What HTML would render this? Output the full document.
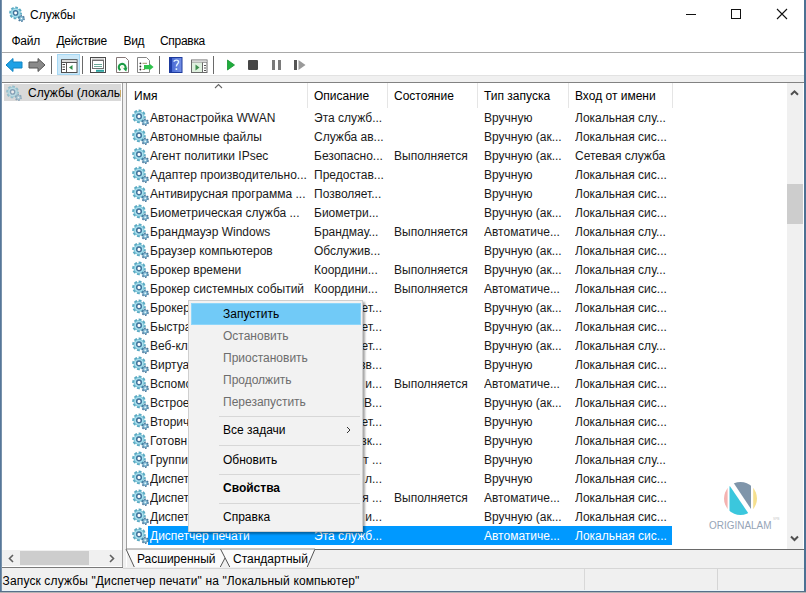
<!DOCTYPE html>
<html><head><meta charset="utf-8">
<style>
*{margin:0;padding:0;box-sizing:border-box}
html,body{width:806px;height:593px;overflow:hidden;background:#fff;font-family:"Liberation Sans",sans-serif;font-size:12px;color:#000}
.abs{position:absolute}
.t{position:absolute;white-space:nowrap;line-height:14px}
.r{position:absolute;white-space:nowrap;line-height:19px;height:19px;overflow:hidden;color:#1a1a1a}
.gear{position:absolute}
.m{position:absolute;left:223px;white-space:nowrap;line-height:14px}
.dis{color:#6d6d6d}
.sep{position:absolute;left:219px;width:141px;height:1px;background:#d7d7d7}
.vl{position:absolute;width:1px;background:#a0a0a0}
</style></head><body>
<svg width="0" height="0" style="position:absolute">
 <defs>
  <symbol id="g" viewBox="0 0 17 17">
   <circle cx="7" cy="7.4" r="5.7" fill="none" stroke="#5aa9c2" stroke-width="2.2" stroke-dasharray="2.8 1.67" stroke-dashoffset="1"/>
   <circle cx="7" cy="7.4" r="5" fill="#a6e0ee" stroke="#62b2c9" stroke-width=".7"/>
   <circle cx="7" cy="7.4" r="2.3" fill="#fff" stroke="#41739b" stroke-width="1.5"/>
   <circle cx="13.2" cy="13.3" r="2.9" fill="none" stroke="#46779c" stroke-width="1.6" stroke-dasharray="1.6 1.45"/>
   <circle cx="13.2" cy="13.3" r="2.4" fill="#86bfd8" stroke="#46779c" stroke-width=".6"/>
   <circle cx="13.2" cy="13.3" r=".8" fill="#fff"/>
  </symbol>
 </defs>
</svg>

<!-- title bar -->
<svg class="abs" style="left:9px;top:6px" width="16" height="16"><use href="#g"/></svg>
<div class="t" style="left:30px;top:8px">Службы</div>
<div class="abs" style="left:686px;top:14px;width:10px;height:1px;background:#111"></div>
<div class="abs" style="left:731px;top:9px;width:10px;height:10px;border:1px solid #111"></div>
<svg class="abs" style="left:776px;top:8px" width="12" height="12" viewBox="0 0 12 12"><path d="M1 1L11 11M11 1L1 11" stroke="#111" stroke-width="1.1"/></svg>

<!-- menu -->
<div class="t" style="left:11.5px;top:34px;letter-spacing:-.25px">Файл</div>
<div class="t" style="left:56.5px;top:34px;letter-spacing:-.3px">Действие</div>
<div class="t" style="left:123.5px;top:34px;letter-spacing:-.3px">Вид</div>
<div class="t" style="left:160px;top:34px;letter-spacing:-.3px">Справка</div>
<div class="abs" style="left:1px;top:52px;width:804px;height:1px;background:#a9a9a9"></div>

<!-- toolbar -->
<div class="abs" style="left:1px;top:75px;width:804px;height:1px;background:#e2e2e2"></div>
<div class="abs" style="left:1px;top:76px;width:804px;height:6px;background:#f0f0f0"></div>
<div class="abs" style="left:1px;top:82px;width:804px;height:1px;background:#828282"></div>

<!-- back arrow -->
<svg class="abs" style="left:5px;top:57px" width="18" height="16" viewBox="0 0 18 16"><path d="M1 8L8 1.5V5H17V11H8V14.5Z" fill="#1ea1e6" stroke="#1185c4" stroke-width="1"/></svg>
<!-- forward arrow -->
<svg class="abs" style="left:28px;top:57px" width="18" height="16" viewBox="0 0 18 16"><path d="M17 8L10 1.5V5H1V11H10V14.5Z" fill="#8a8a8a" stroke="#555" stroke-width="1"/></svg>
<div class="vl" style="left:51px;top:56px;height:18px;background:#6a6a6a"></div>
<!-- highlighted btn -->
<div class="abs" style="left:57px;top:54px;width:23px;height:21px;background:#cce8f8;border:1px solid #a7d8f4"></div>
<svg class="abs" style="left:61px;top:59px" width="17" height="15" viewBox="0 0 17 15"><rect x=".5" y=".7" width="15.5" height="12.8" fill="#fff" stroke="#4d4d4d"/><rect x="1" y="1.2" width="14.5" height="2" fill="#dcdcdc"/><path d="M1 3.5H16" stroke="#555"/><path d="M1.5 5.5H4M1.5 8H4M1.5 10.5H4" stroke="#444"/><path d="M5.5 3.5V13.5" stroke="#555"/><path d="M11.5 6L8 8.5L11.5 11Z" fill="#2e8f48"/></svg>
<div class="vl" style="left:82px;top:56px;height:18px;background:#6a6a6a"></div>
<!-- properties icon -->
<svg class="abs" style="left:90px;top:57px" width="16" height="16" viewBox="0 0 16 16"><rect x=".5" y=".5" width="15" height="15" fill="#fff" stroke="#4a4a4a"/><path d="M2 2.2H14" stroke="#9a9a9a"/><rect x="2.5" y="3.5" width="11" height="8" fill="#fff" stroke="#707070"/><path d="M4 7.5H12M4 9.5H12" stroke="#6aa898"/><rect x="6" y="12.8" width="8" height="2" fill="#2aa3a0"/></svg>
<!-- refresh -->
<svg class="abs" style="left:116px;top:57px" width="14" height="16" viewBox="0 0 14 16"><path d="M.5 .5H9.5L12.5 3.5V15.5H.5Z" fill="#fff" stroke="#857777"/><path d="M4.5 13.2A3.4 3.4 0 1 1 9.1 12" fill="none" stroke="#1c9c45" stroke-width="2.1"/><path d="M7 11.6L11.4 10.6L10.2 14.6Z" fill="#1c9c45"/><circle cx="6.2" cy="10.3" r="1.2" fill="#eef6d8"/></svg>
<!-- export -->
<svg class="abs" style="left:137px;top:57px" width="18" height="16" viewBox="0 0 18 16"><path d="M.5 .5H9.5L12.5 3.5V15.5H.5Z" fill="#fff" stroke="#858585"/><circle cx="3.4" cy="6.3" r=".9" fill="#333"/><circle cx="3.4" cy="9.5" r=".9" fill="#333"/><circle cx="3.4" cy="12.5" r=".9" fill="#333"/><path d="M5.5 6.3H10M5.5 12.5H8" stroke="#a89070"/><path d="M7 8H12.3V6.6L16.6 10.1L12.3 13.6V12.2H7Z" fill="#2fc24c"/></svg>
<div class="vl" style="left:159px;top:56px;height:18px;background:#6a6a6a"></div>
<!-- help -->
<svg class="abs" style="left:169px;top:57px" width="14" height="16" viewBox="0 0 14 16"><defs><linearGradient id="hg" x1="0" x2="1"><stop offset="0" stop-color="#3f63d0"/><stop offset="1" stop-color="#7590e6"/></linearGradient></defs><rect x=".5" y=".5" width="12.5" height="15" fill="url(#hg)" stroke="#1d3a9c"/><rect x="1" y="1" width="2" height="14" fill="#1f3ea8"/><path d="M5 4.8C5 2.6 9.6 2.6 9.6 5C9.6 6.8 7.4 7 7.4 9.6" fill="none" stroke="#dff2ff" stroke-width="1.4"/><rect x="6.6" y="11.2" width="1.6" height="1.8" fill="#dff2ff"/></svg>
<!-- action pane -->
<svg class="abs" style="left:191px;top:59px" width="17" height="14" viewBox="0 0 17 14"><rect x=".5" y="1" width="15.5" height="12.5" fill="#fff" stroke="#6a6a6a"/><path d="M1 3.2H16" stroke="#7a7a7a"/><rect x="1" y="1.6" width="15" height="1.2" fill="#d8d8d8"/><rect x="1" y="3.7" width="10" height="9.3" fill="#dff0df"/><path d="M4.5 5.5L8.5 8.5L4.5 11.5Z" fill="#3f8f50"/><line x1="11.5" y1="3.5" x2="11.5" y2="13" stroke="#6a6a6a"/><path d="M13 6.5H15M13 9H15M13 11.5H15" stroke="#555"/></svg>
<div class="vl" style="left:213px;top:56px;height:18px;background:#6a6a6a"></div>
<!-- play / stop / pause / resume -->
<svg class="abs" style="left:227px;top:59px" width="8" height="12" viewBox="0 0 8 12"><path d="M.5 1L7.5 6L.5 11Z" fill="#1fae3c" stroke="#15902e" stroke-width=".8"/></svg>
<div class="abs" style="left:248px;top:60px;width:10px;height:10px;background:#464646;border-radius:1px"></div>
<div class="abs" style="left:272px;top:60px;width:3px;height:10px;background:#7a7a7a"></div>
<div class="abs" style="left:278px;top:60px;width:3px;height:10px;background:#7a7a7a"></div>
<div class="abs" style="left:294px;top:60px;width:3px;height:10px;background:#555"></div>
<svg class="abs" style="left:298px;top:59px" width="8" height="12" viewBox="0 0 8 12"><path d="M.5 1L7.5 6L.5 11Z" fill="#9a9a9a"/></svg>

<!-- left pane -->
<div class="abs" style="left:1px;top:83px;width:121px;height:485px;background:#fff"></div>
<div class="abs" style="left:4px;top:84px;width:117px;height:17px;background:#d9d9d9"></div>
<svg class="abs" style="left:6px;top:85px;opacity:.55" width="16" height="16"><use href="#g"/></svg>
<div class="abs" style="left:28px;top:85px;width:93px;height:16px;overflow:hidden;white-space:nowrap;line-height:17px">Службы (локальные)</div>
<!-- left hscroll -->
<div class="abs" style="left:1px;top:550px;width:121px;height:16px;background:#f0f0f0"></div>
<div class="abs" style="left:20px;top:551px;width:69px;height:14px;background:#cdcdcd"></div>
<svg class="abs" style="left:8px;top:554px" width="6" height="9" viewBox="0 0 6 9"><path d="M5 1L1.5 4.5L5 8" fill="none" stroke="#606060" stroke-width="1.6"/></svg>
<svg class="abs" style="left:109px;top:554px" width="6" height="9" viewBox="0 0 6 9"><path d="M1 1L4.5 4.5L1 8" fill="none" stroke="#606060" stroke-width="1.6"/></svg>
<div class="abs" style="left:122px;top:83px;width:1px;height:485px;background:#a0a0a0"></div>
<div class="abs" style="left:123px;top:83px;width:3px;height:485px;background:#f0f0f0"></div>
<div class="abs" style="left:126px;top:83px;width:1px;height:466px;background:#a0a0a0"></div>

<!-- right pane header -->
<div class="t" style="left:134px;top:89px">Имя</div>
<svg class="abs" style="left:214px;top:83px" width="9" height="6" viewBox="0 0 9 6"><path d="M1 5L4.5 1.5L8 5" fill="none" stroke="#666" stroke-width="1.1"/></svg>
<div class="vl" style="left:307px;top:83px;height:25px;background:#e5e5e5"></div>
<div class="t" style="left:314px;top:89px">Описание</div>
<div class="vl" style="left:387px;top:83px;height:25px;background:#e5e5e5"></div>
<div class="t" style="left:394px;top:89px">Состояние</div>
<div class="vl" style="left:477px;top:83px;height:25px;background:#e5e5e5"></div>
<div class="t" style="left:484px;top:89px">Тип запуска</div>
<div class="vl" style="left:568px;top:83px;height:25px;background:#e5e5e5"></div>
<div class="t" style="left:575px;top:89px">Вход от имени</div>
<div class="vl" style="left:672px;top:83px;height:25px;background:#e5e5e5"></div>

<svg class="gear" style="left:132px;top:109px" width="17" height="17"><use href="#g"/></svg>
<div class="r" style="left:150px;top:109px;width:157px">Автонастройка WWAN</div>
<div class="r" style="left:314px;top:109px;width:73px">Эта служб...</div>
<div class="r" style="left:484px;top:109px;width:84px">Вручную</div>
<div class="r" style="left:575px;top:109px;width:97px">Локальная слу...</div>
<svg class="gear" style="left:132px;top:128px" width="17" height="17"><use href="#g"/></svg>
<div class="r" style="left:150px;top:128px;width:157px">Автономные файлы</div>
<div class="r" style="left:314px;top:128px;width:73px">Служба ав...</div>
<div class="r" style="left:484px;top:128px;width:84px">Вручную (ак...</div>
<div class="r" style="left:575px;top:128px;width:97px">Локальная сис...</div>
<svg class="gear" style="left:132px;top:147px" width="17" height="17"><use href="#g"/></svg>
<div class="r" style="left:150px;top:147px;width:157px">Агент политики IPsec</div>
<div class="r" style="left:314px;top:147px;width:73px">Безопасно...</div>
<div class="r" style="left:394px;top:147px;width:83px">Выполняется</div>
<div class="r" style="left:484px;top:147px;width:84px">Вручную (ак...</div>
<div class="r" style="left:575px;top:147px;width:97px">Сетевая служба</div>
<svg class="gear" style="left:132px;top:166px" width="17" height="17"><use href="#g"/></svg>
<div class="r" style="left:150px;top:166px;width:157px">Адаптер производительно...</div>
<div class="r" style="left:314px;top:166px;width:73px">Предостав...</div>
<div class="r" style="left:484px;top:166px;width:84px">Вручную</div>
<div class="r" style="left:575px;top:166px;width:97px">Локальная сис...</div>
<svg class="gear" style="left:132px;top:185px" width="17" height="17"><use href="#g"/></svg>
<div class="r" style="left:150px;top:185px;width:157px">Антивирусная программа ...</div>
<div class="r" style="left:314px;top:185px;width:73px">Позволяет...</div>
<div class="r" style="left:484px;top:185px;width:84px">Вручную</div>
<div class="r" style="left:575px;top:185px;width:97px">Локальная сис...</div>
<svg class="gear" style="left:132px;top:204px" width="17" height="17"><use href="#g"/></svg>
<div class="r" style="left:150px;top:204px;width:157px">Биометрическая служба ...</div>
<div class="r" style="left:314px;top:204px;width:73px">Биометри...</div>
<div class="r" style="left:484px;top:204px;width:84px">Вручную (ак...</div>
<div class="r" style="left:575px;top:204px;width:97px">Локальная сис...</div>
<svg class="gear" style="left:132px;top:223px" width="17" height="17"><use href="#g"/></svg>
<div class="r" style="left:150px;top:223px;width:157px">Брандмауэр Windows</div>
<div class="r" style="left:314px;top:223px;width:73px">Брандмау...</div>
<div class="r" style="left:394px;top:223px;width:83px">Выполняется</div>
<div class="r" style="left:484px;top:223px;width:84px">Автоматиче...</div>
<div class="r" style="left:575px;top:223px;width:97px">Локальная слу...</div>
<svg class="gear" style="left:132px;top:242px" width="17" height="17"><use href="#g"/></svg>
<div class="r" style="left:150px;top:242px;width:157px">Браузер компьютеров</div>
<div class="r" style="left:314px;top:242px;width:73px">Обслужив...</div>
<div class="r" style="left:484px;top:242px;width:84px">Вручную (ак...</div>
<div class="r" style="left:575px;top:242px;width:97px">Локальная сис...</div>
<svg class="gear" style="left:132px;top:261px" width="17" height="17"><use href="#g"/></svg>
<div class="r" style="left:150px;top:261px;width:157px">Брокер времени</div>
<div class="r" style="left:314px;top:261px;width:73px">Координи...</div>
<div class="r" style="left:394px;top:261px;width:83px">Выполняется</div>
<div class="r" style="left:484px;top:261px;width:84px">Вручную (ак...</div>
<div class="r" style="left:575px;top:261px;width:97px">Локальная слу...</div>
<svg class="gear" style="left:132px;top:280px" width="17" height="17"><use href="#g"/></svg>
<div class="r" style="left:150px;top:280px;width:157px">Брокер системных событий</div>
<div class="r" style="left:314px;top:280px;width:73px">Координи...</div>
<div class="r" style="left:394px;top:280px;width:83px">Выполняется</div>
<div class="r" style="left:484px;top:280px;width:84px">Автоматиче...</div>
<div class="r" style="left:575px;top:280px;width:97px">Локальная сис...</div>
<svg class="gear" style="left:132px;top:299px" width="17" height="17"><use href="#g"/></svg>
<div class="r" style="left:150px;top:299px;width:157px">Брокер</div>
<div class="r" style="left:300px;top:299px;width:82px;text-align:right">ет...</div>
<div class="r" style="left:484px;top:299px;width:84px">Вручную (ак...</div>
<div class="r" style="left:575px;top:299px;width:97px">Локальная сис...</div>
<svg class="gear" style="left:132px;top:318px" width="17" height="17"><use href="#g"/></svg>
<div class="r" style="left:150px;top:318px;width:157px">Быстра</div>
<div class="r" style="left:300px;top:318px;width:82px;text-align:right">ет...</div>
<div class="r" style="left:484px;top:318px;width:84px">Вручную (ак...</div>
<div class="r" style="left:575px;top:318px;width:97px">Локальная сис...</div>
<svg class="gear" style="left:132px;top:337px" width="17" height="17"><use href="#g"/></svg>
<div class="r" style="left:150px;top:337px;width:157px">Веб-кл</div>
<div class="r" style="left:300px;top:337px;width:82px;text-align:right">ет...</div>
<div class="r" style="left:484px;top:337px;width:84px">Вручную (ак...</div>
<div class="r" style="left:575px;top:337px;width:97px">Локальная слу...</div>
<svg class="gear" style="left:132px;top:356px" width="17" height="17"><use href="#g"/></svg>
<div class="r" style="left:150px;top:356px;width:157px">Виртуа</div>
<div class="r" style="left:300px;top:356px;width:82px;text-align:right">зв...</div>
<div class="r" style="left:484px;top:356px;width:84px">Вручную</div>
<div class="r" style="left:575px;top:356px;width:97px">Локальная сис...</div>
<svg class="gear" style="left:132px;top:375px" width="17" height="17"><use href="#g"/></svg>
<div class="r" style="left:150px;top:375px;width:157px">Вспомо</div>
<div class="r" style="left:300px;top:375px;width:82px;text-align:right">и...</div>
<div class="r" style="left:394px;top:375px;width:83px">Выполняется</div>
<div class="r" style="left:484px;top:375px;width:84px">Автоматиче...</div>
<div class="r" style="left:575px;top:375px;width:97px">Локальная сис...</div>
<svg class="gear" style="left:132px;top:394px" width="17" height="17"><use href="#g"/></svg>
<div class="r" style="left:150px;top:394px;width:157px">Встрое</div>
<div class="r" style="left:300px;top:394px;width:82px;text-align:right">ЛВ...</div>
<div class="r" style="left:484px;top:394px;width:84px">Вручную (ак...</div>
<div class="r" style="left:575px;top:394px;width:97px">Локальная сис...</div>
<svg class="gear" style="left:132px;top:413px" width="17" height="17"><use href="#g"/></svg>
<div class="r" style="left:150px;top:413px;width:157px">Вторич</div>
<div class="r" style="left:300px;top:413px;width:82px;text-align:right">ет...</div>
<div class="r" style="left:484px;top:413px;width:84px">Вручную</div>
<div class="r" style="left:575px;top:413px;width:97px">Локальная сис...</div>
<svg class="gear" style="left:132px;top:432px" width="17" height="17"><use href="#g"/></svg>
<div class="r" style="left:150px;top:432px;width:157px">Готовн</div>
<div class="r" style="left:300px;top:432px;width:82px;text-align:right">зк...</div>
<div class="r" style="left:484px;top:432px;width:84px">Вручную</div>
<div class="r" style="left:575px;top:432px;width:97px">Локальная сис...</div>
<svg class="gear" style="left:132px;top:451px" width="17" height="17"><use href="#g"/></svg>
<div class="r" style="left:150px;top:451px;width:157px">Группи</div>
<div class="r" style="left:300px;top:451px;width:82px;text-align:right">т ...</div>
<div class="r" style="left:484px;top:451px;width:84px">Вручную</div>
<div class="r" style="left:575px;top:451px;width:97px">Локальная слу...</div>
<svg class="gear" style="left:132px;top:470px" width="17" height="17"><use href="#g"/></svg>
<div class="r" style="left:150px;top:470px;width:157px">Диспет</div>
<div class="r" style="left:300px;top:470px;width:82px;text-align:right">л...</div>
<div class="r" style="left:484px;top:470px;width:84px">Вручную</div>
<div class="r" style="left:575px;top:470px;width:97px">Локальная сис...</div>
<svg class="gear" style="left:132px;top:489px" width="17" height="17"><use href="#g"/></svg>
<div class="r" style="left:150px;top:489px;width:157px">Диспет</div>
<div class="r" style="left:300px;top:489px;width:82px;text-align:right">я ...</div>
<div class="r" style="left:394px;top:489px;width:83px">Выполняется</div>
<div class="r" style="left:484px;top:489px;width:84px">Автоматиче...</div>
<div class="r" style="left:575px;top:489px;width:97px">Локальная сис...</div>
<svg class="gear" style="left:132px;top:508px" width="17" height="17"><use href="#g"/></svg>
<div class="r" style="left:150px;top:508px;width:157px">Диспет</div>
<div class="r" style="left:300px;top:508px;width:82px;text-align:right">и...</div>
<div class="r" style="left:484px;top:508px;width:84px">Вручную (ак...</div>
<div class="r" style="left:575px;top:508px;width:97px">Локальная сис...</div>
<div class="abs" style="left:148px;top:526px;width:524px;height:19px;background:#0099ff"></div>
<svg class="gear" style="left:132px;top:527px" width="17" height="17"><use href="#g"/></svg>
<div class="r" style="left:150px;top:527px;width:157px;color:#fff">Диспетчер печати</div>
<div class="r" style="left:314px;top:527px;width:73px;color:#fff">Эта служб...</div>
<div class="r" style="left:484px;top:527px;width:84px;color:#fff">Автоматиче...</div>
<div class="r" style="left:575px;top:527px;width:97px;color:#fff">Локальная сис...</div>

<!-- vertical scrollbar -->
<div class="abs" style="left:787px;top:83px;width:16px;height:466px;background:#f0f0f0"></div>
<div class="abs" style="left:787px;top:184px;width:16px;height:40px;background:#cdcdcd"></div>
<svg class="abs" style="left:790px;top:89px" width="9" height="7" viewBox="0 0 9 7"><path d="M1 5.8L4.5 2.3L8 5.8" fill="none" stroke="#505050" stroke-width="2"/></svg>
<svg class="abs" style="left:790px;top:535px" width="9" height="7" viewBox="0 0 9 7"><path d="M1 1.5L4.5 5L8 1.5" fill="none" stroke="#505050" stroke-width="2"/></svg>

<!-- watermark -->
<svg class="abs" style="left:706px;top:478px" width="82" height="54" viewBox="0 0 82 54">
 <defs><clipPath id="cc"><circle cx="34.5" cy="20.5" r="16.5"/></clipPath></defs>
 <g clip-path="url(#cc)">
  <rect x="17" y="0" width="4.6" height="40" fill="#f4b3b1"/>
  <rect x="47.2" y="0" width="6" height="40" fill="#f6e08e"/>
  <path d="M23.5 7.5L44.2 38H23.5Z" fill="#3bc7dd"/>
  <path d="M24.3 0H45V31Z" fill="#7f95aa"/>
 </g>
 <text x="3" y="50.6" font-family="Liberation Sans" font-size="10.2" fill="#96a5b7" textLength="62.5" lengthAdjust="spacingAndGlyphs">ORIGINALAM</text>
 <text x="67" y="41.5" font-family="Liberation Sans" font-size="3.2" fill="#c8c8c8">SPB</text>
</svg>

<!-- bottom pane border + tabs -->
<div class="abs" style="left:126px;top:549px;width:679px;height:1px;background:#696969"></div>
<div class="abs" style="left:127px;top:550px;width:678px;height:18px;background:#f0f0f0"></div>
<svg class="abs" style="left:122px;top:548px" width="200" height="21" viewBox="0 0 200 21">
 <path d="M4 1L12.5 19.5H98L103 10L98.5 1Z" fill="#fbfbfb"/>
 <path d="M98.5 1L108 19.5H185L193 1Z" fill="#fbfbfb"/>
 <path d="M4 1L12.5 19.5H98M98.5 1L108 19.5H185L193 1M98 19.5L103 10" fill="none" stroke="#555" stroke-width="1"/>
 <path d="M4 1H193" stroke="#8a8a8a" stroke-width="1"/>
</svg>
<div class="t" style="left:137px;top:552px">Расширенный</div>
<div class="t" style="left:233px;top:552px">Стандартный</div>

<!-- status bar -->
<div class="abs" style="left:1px;top:567px;width:122px;height:1px;background:#7a7a7a"></div>
<div class="abs" style="left:123px;top:567px;width:682px;height:1px;background:#f0f0f0"></div>
<div class="abs" style="left:123px;top:568px;width:682px;height:1px;background:#d6d6d6"></div>
<div class="abs" style="left:1px;top:568px;width:122px;height:1px;background:#f0f0f0"></div>
<div class="abs" style="left:1px;top:569px;width:804px;height:22px;background:#f0f0f0"></div>
<div class="abs" style="left:717px;top:569px;width:1px;height:22px;background:#d5d5d5"></div>
<div class="abs" style="left:584px;top:569px;width:1px;height:22px;background:#d8d8d8"></div>
<div class="abs" style="left:1px;top:590px;width:804px;height:1px;background:#e8f4fb"></div>
<div class="t" style="left:2.6px;top:574px;letter-spacing:0.13px">Запуск службы "Диспетчер печати" на "Локальный компьютер"</div>

<!-- context menu -->
<div class="abs" style="left:188px;top:300px;width:175px;height:232px;background:#f2f2f2;border:1px solid #cfcfcf;box-shadow:2px 2px 2px rgba(0,0,0,.35)"></div>
<div class="abs" style="left:191px;top:303px;width:170px;height:22px;background:#71caf7;border:1px solid #8ed6fa"></div>
<div class="m" style="top:307px">Запустить</div>
<div class="m dis" style="top:329px">Остановить</div>
<div class="m dis" style="top:351px">Приостановить</div>
<div class="m dis" style="top:373px">Продолжить</div>
<div class="m dis" style="top:395px">Перезапустить</div>
<div class="sep" style="top:416px"></div>
<div class="m" style="top:423px">Все задачи</div>
<svg class="abs" style="left:346px;top:426px" width="5" height="8" viewBox="0 0 5 8"><path d="M1 1L4 4L1 7" fill="none" stroke="#333" stroke-width="1"/></svg>
<div class="sep" style="top:445px"></div>
<div class="m" style="top:453px">Обновить</div>
<div class="sep" style="top:474px"></div>
<div class="m" style="top:481px;font-weight:bold">Свойства</div>
<div class="sep" style="top:503px"></div>
<div class="m" style="top:510px">Справка</div>

<!-- window borders -->
<div class="abs" style="left:0;top:0;width:1px;height:593px;background:#56779a"></div>
<div class="abs" style="left:1px;top:0;width:1px;height:593px;background:#7892ab"></div>
<div class="abs" style="left:804px;top:0;width:2px;height:593px;background:#4c7193"></div>
<div class="abs" style="left:0;top:591px;width:806px;height:1px;background:#56708a"></div>
<div class="abs" style="left:0;top:592px;width:806px;height:1px;background:#b4b4b4"></div>

</body></html>
